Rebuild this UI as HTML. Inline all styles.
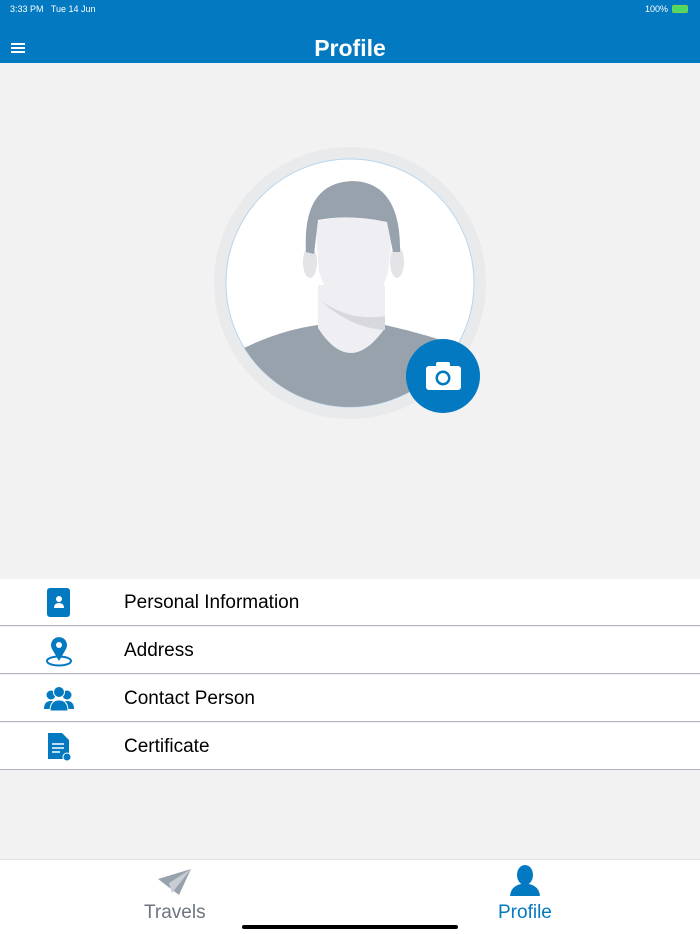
<!DOCTYPE html>
<html><head><meta charset="utf-8"><style>
*{margin:0;padding:0;box-sizing:border-box}
body{width:700px;height:934px;background:#f2f2f2;font-family:"Liberation Sans",sans-serif;position:relative;overflow:hidden}
.hdr{position:absolute;left:0;top:0;width:700px;height:63px;background:#0279c1;color:#fff}
.st{position:absolute;top:4px;font-size:9px}
.title{position:absolute;top:35px;width:100%;text-align:center;font-size:23px;font-weight:bold}
.row{position:absolute;left:0;width:700px;height:47px;background:#fff;border-bottom:1.5px solid #b0b4bc}
.row span{position:absolute;left:124px;top:13px;font-size:19px;color:#000}
.row svg{position:absolute;left:42px;top:7px}
.tab{position:absolute;top:859px;left:0;width:700px;height:75px;background:#fff;border-top:1px solid #e2e2e2}
</style></head><body>
<div class="hdr">
<div class="st" style="left:10px">3:33 PM&nbsp;&nbsp; Tue 14 Jun</div>
<div class="st" style="right:32px">100%</div>
<div style="position:absolute;right:12px;top:5px;width:16px;height:8px;border:1px solid #7ad04a;border-radius:2px;background:#4cd964"></div>
<div style="position:absolute;left:11px;top:43px;width:14px;height:2px;background:#fff;box-shadow:0 4px 0 #fff,0 8px 0 #fff"></div>
<div class="title">Profile</div>
</div>
<svg style="position:absolute;left:0;top:0" width="700" height="580">
<circle cx="350" cy="283" r="136" fill="#e9eaec"/>
<defs><clipPath id="c"><circle cx="350" cy="283" r="124"/></clipPath></defs>
<circle cx="350" cy="283" r="124" fill="#fff" stroke="#b8d6ee" stroke-width="1"/>
<g clip-path="url(#c)">
<path d="M240 350 Q280 330 318 325 L385 325 Q430 335 470 350 L480 420 L220 420Z" fill="#98a2ac"/>
<path d="M318 285 L318 328 Q350 378 385 328 L385 285Z" fill="#efeef2"/>
<path d="M320 300 Q350 322 385 316 L385 330 Q350 328 320 300Z" fill="#d7d8de"/>
<ellipse cx="310" cy="262" rx="7" ry="16" fill="#e3e3e8"/>
<ellipse cx="397" cy="262" rx="7" ry="16" fill="#e3e3e8"/>
<path d="M315 222 L319 272 Q330 306 352 310 Q378 306 388 272 L394 222 Q350 212 315 222Z" fill="#efeef2"/>
<path d="M306 252 Q302 183 352 181 Q401 182 400 252 L393 252 L387 222 Q350 214 318 220 L314 254Z" fill="#98a2ac"/>
</g>
<circle cx="443" cy="376" r="37" fill="#0279c1"/>
<rect x="426" y="366" width="35" height="24" rx="3" fill="#fff"/>
<rect x="436" y="362" width="14" height="6" rx="2" fill="#fff"/>
<circle cx="443" cy="378" r="7.5" fill="#0279c1"/><circle cx="443" cy="378" r="5" fill="#fff"/>
</svg>
<div class="row" style="top:579px"><svg width="34" height="34" viewBox="0 0 34 34"><rect x="5" y="2" width="23" height="29" rx="3" fill="#0279c1"/><circle cx="17" cy="13" r="3" fill="#fff"/><path d="M12 22 Q12 17 17 17 Q22 17 22 22Z" fill="#fff"/></svg><span>Personal Information</span></div>
<div class="row" style="top:627px"><svg width="34" height="34" viewBox="0 0 34 34"><ellipse cx="17" cy="27" rx="12" ry="4.5" fill="none" stroke="#0279c1" stroke-width="2"/><path d="M17 27 L10 15 A8 8 0 1 1 24 15Z" fill="#0279c1"/><circle cx="17" cy="11" r="3" fill="#fff"/></svg><span>Address</span></div>
<div class="row" style="top:675px"><svg width="34" height="34" viewBox="0 0 34 34"><circle cx="9" cy="13" r="4.5" fill="#0279c1"/><circle cx="25" cy="13" r="4.5" fill="#0279c1"/><path d="M2 27 Q2 19 9 19 Q16 19 16 27Z M18 27 Q18 19 25 19 Q32 19 32 27Z" fill="#0279c1"/><circle cx="17" cy="10" r="5.5" fill="#0279c1" stroke="#fff"/><path d="M8 29 Q8 18 17 18 Q26 18 26 29Z" fill="#0279c1" stroke="#fff"/></svg><span>Contact Person</span></div>
<div class="row" style="top:723px"><svg width="34" height="34" viewBox="0 0 34 34"><path d="M6 3 H20 L27 10 V29 H6Z" fill="#0279c1"/><path d="M10 14 H22 M10 18 H22 M10 22 H18" stroke="#fff" stroke-width="1.5"/><circle cx="25" cy="27" r="4" fill="#0279c1" stroke="#fff"/></svg><span>Certificate</span></div>
<div class="tab">
<svg style="position:absolute;left:157px;top:7px" width="36" height="30" viewBox="0 0 36 30"><path d="M1 12 L34 2 L22 28 Z" fill="#98a2ac"/><path d="M12 16 L34 2 L15 26Z" fill="#c8cdd3"/></svg>
<div style="position:absolute;left:144px;top:42px;font-size:19px;color:#6c7580">Travels</div>
<svg style="position:absolute;left:508px;top:5px" width="34" height="32" viewBox="0 0 34 32"><ellipse cx="17" cy="10" rx="8" ry="10" fill="#0279c1"/><path d="M2 31 Q3 21 13 19 L21 19 Q31 21 32 31Z" fill="#0279c1"/></svg>
<div style="position:absolute;left:498px;top:42px;font-size:19px;color:#0279c1">Profile</div>
<div style="position:absolute;left:242px;top:65px;width:216px;height:4px;border-radius:2px;background:#000"></div>
</div>
</body></html>
